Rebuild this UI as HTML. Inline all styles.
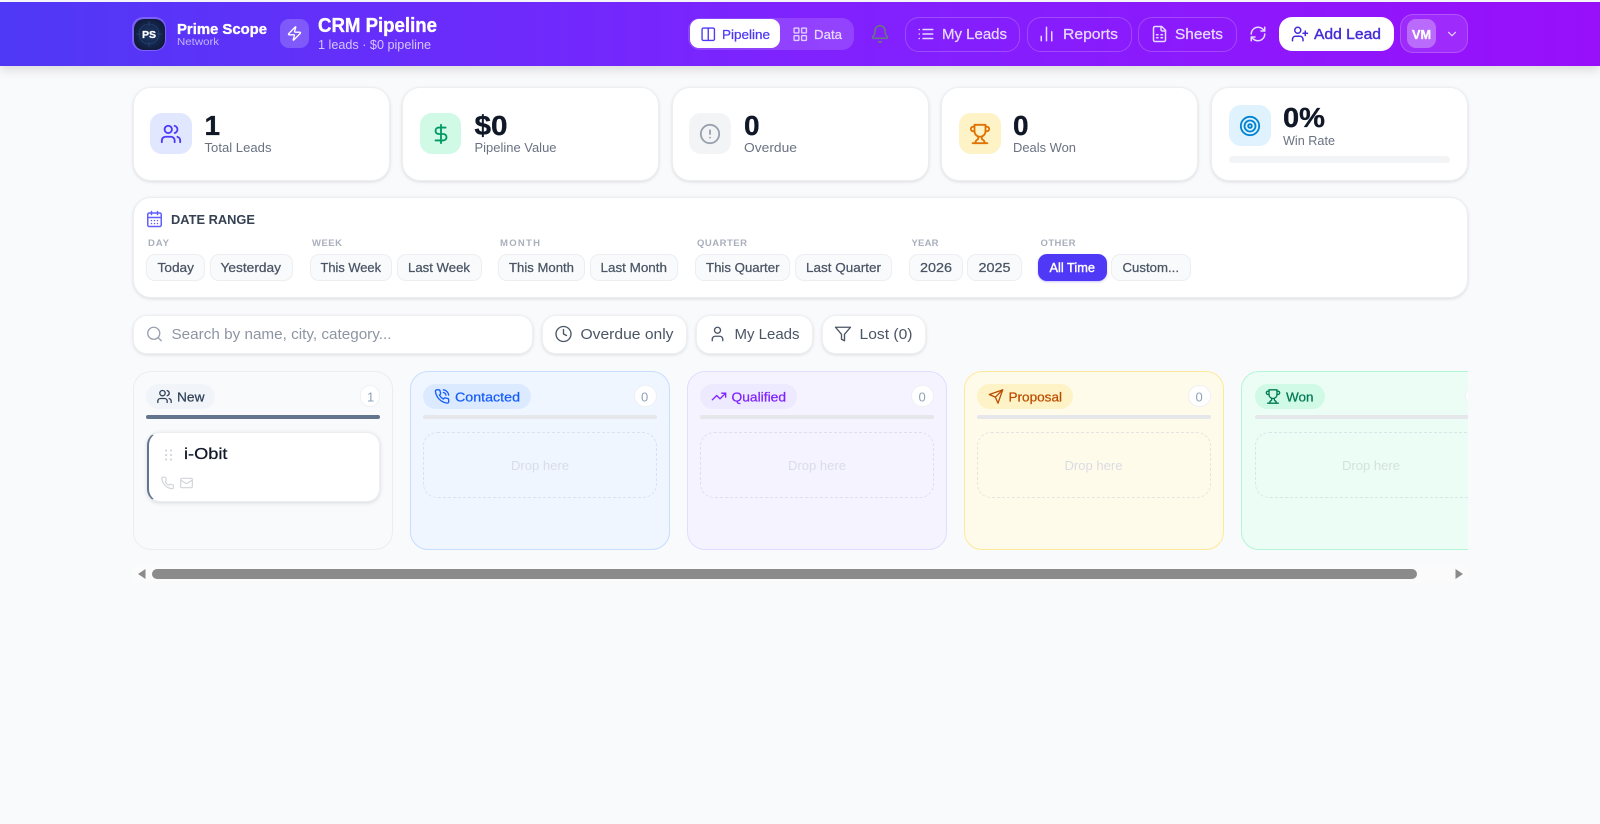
<!DOCTYPE html>
<html lang="en"><head><meta charset="utf-8"><title>CRM Pipeline</title>
<style>
html,body{margin:0;padding:0;width:1600px;height:824px;overflow:hidden;background:#f9fafb;font-family:"Liberation Sans",sans-serif}
.b{position:absolute;box-sizing:border-box}
.hd{left:0;top:2px;width:1600px;height:64px;background:linear-gradient(90deg,#4f39f6,#7f22fe 50%,#9810fa);box-shadow:0 4px 10px rgba(0,0,0,.12)}
.hb{top:17px;height:35px;border:1px solid rgba(255,255,255,.2);border-radius:14px}
.card{top:87px;width:257px;height:93.5px;background:#fff;border:1px solid #eceef1;border-radius:18px;box-shadow:0 1px 3px rgba(0,0,0,.12)}
.ib{width:41.5px;height:41px;border-radius:12px}
.pill{top:254px;height:27px;background:#f9fafb;border:1px solid #eceef1;border-radius:9px}
.fb{top:314.5px;height:39px;background:#fff;border:1px solid #eef0f3;border-radius:14px;box-shadow:0 1px 3px rgba(0,0,0,.12)}
.col{top:371px;width:260px;height:179px;border:1px solid;border-radius:18px}
.chip{top:384px;height:25px;border-radius:13px}
.cnt{top:385px;height:22px;background:#fff;border:1px solid #eef0f3;border-radius:11px}
.bar{top:415px;width:234px;height:4px;border-radius:2px;background:#e5e7eb}
.dz{top:432px;width:234px;height:66px;border:1.5px dashed rgba(170,180,200,.3);border-radius:14px}
svg.o{position:absolute;left:0;top:0;width:1600px;height:824px;pointer-events:none}
svg.o text{font-family:"Liberation Sans",sans-serif}
.ic{fill:none;stroke:currentColor;stroke-width:2;stroke-linecap:round;stroke-linejoin:round}
.m{stroke:currentColor;stroke-width:.25;fill:currentColor}
.h{stroke:currentColor;stroke-width:.35;fill:currentColor;font-weight:700}
</style></head><body>

<div class="b hd"></div>
<div class="b" style="left:132px;top:17px;width:34px;height:34px;border-radius:11px;background:rgba(255,255,255,.22)"></div>
<div class="b" style="left:133.5px;top:18.5px;width:31px;height:31px;border-radius:10px;background:radial-gradient(circle,#1d3a66,#101a3c 75%)"></div>
<div class="b" style="left:280px;top:19px;width:29px;height:29px;border-radius:9px;background:rgba(255,255,255,.2)"></div>
<div class="b" style="left:688px;top:17.5px;width:166px;height:32.5px;border-radius:12px;background:rgba(255,255,255,.15)"></div>
<div class="b" style="left:690px;top:19px;width:90px;height:29px;border-radius:9px;background:#fff"></div>
<div class="b hb" style="left:905px;width:115px"></div>
<div class="b hb" style="left:1027px;width:105px"></div>
<div class="b hb" style="left:1138px;width:99px"></div>
<div class="b" style="left:1279px;top:17px;width:115px;height:34px;border-radius:13px;background:#fff"></div>
<div class="b" style="left:1400px;top:14px;width:68px;height:39px;border-radius:13px;background:rgba(255,255,255,.1);border:1px solid rgba(255,255,255,.2)"></div>
<div class="b" style="left:1407px;top:19px;width:29px;height:29px;border-radius:9px;background:rgba(255,255,255,.3)"></div>

<div class="b card" style="left:133px"></div>
<div class="b card" style="left:402px"></div>
<div class="b card" style="left:671.5px"></div>
<div class="b card" style="left:941px"></div>
<div class="b card" style="left:1211px"></div>
<div class="b ib" style="left:150px;top:113px;background:#e0e7ff"></div>
<div class="b ib" style="left:419.5px;top:113px;background:#d0fae5"></div>
<div class="b ib" style="left:689px;top:113px;background:#f3f4f6"></div>
<div class="b ib" style="left:959px;top:113px;background:#fef3c6"></div>
<div class="b ib" style="left:1229px;top:105px;background:#dff2fe"></div>
<div class="b" style="left:1229px;top:156px;width:221px;height:7px;border-radius:4px;background:#f3f4f6"></div>

<div class="b" style="left:133px;top:197px;width:1335px;height:101px;background:#fff;border:1px solid #eceef1;border-radius:18px;box-shadow:0 1px 3px rgba(0,0,0,.12)"></div>
<div class="b pill" style="left:146px;width:59px"></div>
<div class="b pill" style="left:209.5px;width:83.5px"></div>
<div class="b pill" style="left:309.5px;width:82.5px"></div>
<div class="b pill" style="left:397px;width:85px"></div>
<div class="b pill" style="left:498px;width:87px"></div>
<div class="b pill" style="left:589.5px;width:88.5px"></div>
<div class="b pill" style="left:695px;width:95px"></div>
<div class="b pill" style="left:794.5px;width:97.5px"></div>
<div class="b pill" style="left:909px;width:54px"></div>
<div class="b pill" style="left:967px;width:55px"></div>
<div class="b pill" style="left:1038px;width:69px;background:#4f39f6;border-color:#4f39f6;box-shadow:0 1px 2px rgba(79,57,246,.3)"></div>
<div class="b pill" style="left:1111px;width:80px"></div>

<div class="b fb" style="left:133px;width:400px"></div>
<div class="b fb" style="left:541.5px;width:145px"></div>
<div class="b fb" style="left:695.5px;width:117px"></div>
<div class="b fb" style="left:821.5px;width:104.5px"></div>

<div class="b" style="left:133px;top:365px;width:1335px;height:190px;overflow:hidden">
  <div class="b col" style="left:0;top:5.5px;background:#f8fafc;border-color:#eaeef4"></div>
  <div class="b col" style="left:277px;top:5.5px;background:#eff6ff;border-color:#c6deff"></div>
  <div class="b col" style="left:554px;top:5.5px;background:#f5f3ff;border-color:#e2dcff"></div>
  <div class="b col" style="left:831px;top:5.5px;background:#fffbeb;border-color:#fee99b"></div>
  <div class="b col" style="left:1108px;top:5.5px;background:#ecfdf5;border-color:#b4f5d8"></div>

  <div class="b chip" style="left:13px;top:19px;width:69px;background:#f1f5f9"></div>
  <div class="b chip" style="left:290px;top:19px;width:108px;background:#dbeafe"></div>
  <div class="b chip" style="left:567px;top:19px;width:97px;background:#ede9fe"></div>
  <div class="b chip" style="left:844px;top:19px;width:96px;background:#fef3c6"></div>
  <div class="b chip" style="left:1121.5px;top:19px;width:70px;background:#d0fae5"></div>

  <div class="b cnt" style="left:227px;top:20px;width:20px"></div>
  <div class="b cnt" style="left:500.5px;top:20px;width:23px"></div>
  <div class="b cnt" style="left:777.5px;top:20px;width:23px"></div>
  <div class="b cnt" style="left:1054.5px;top:20px;width:23px"></div>
  <div class="b cnt" style="left:1332px;top:20px;width:23px"></div>

  <div class="b bar" style="left:13px;top:50px;background:#62748e"></div>
  <div class="b bar" style="left:290px;top:50px"></div>
  <div class="b bar" style="left:567px;top:50px"></div>
  <div class="b bar" style="left:844px;top:50px"></div>
  <div class="b bar" style="left:1121.5px;top:50px"></div>

  <div class="b" style="left:13.5px;top:67px;width:233.5px;height:70px;background:#fff;border:1px solid #eceef1;border-left:2.5px solid #62748e;border-radius:13px;box-shadow:0 1px 4px rgba(0,0,0,.14)"></div>
  <div class="b dz" style="left:290px;top:67px"></div>
  <div class="b dz" style="left:567px;top:67px"></div>
  <div class="b dz" style="left:844px;top:67px"></div>
  <div class="b dz" style="left:1121.5px;top:67px"></div>
</div>

<div class="b" style="left:133px;top:566px;width:1335px;height:16px;background:#fbfbfb"></div>
<div class="b" style="left:151.5px;top:569px;width:1265.5px;height:9.5px;border-radius:5px;background:#8b8b8b"></div>

<svg class="o" viewBox="0 0 1600 824" xmlns="http://www.w3.org/2000/svg">
<defs>
<symbol id="zap" viewBox="0 0 24 24"><path d="M4 14a1 1 0 0 1-.78-1.63l9.9-10.2a.5.5 0 0 1 .86.46l-1.92 6.02A1 1 0 0 0 13 10h7a1 1 0 0 1 .78 1.63l-9.9 10.2a.5.5 0 0 1-.86-.46l1.92-6.02A1 1 0 0 0 11 14z"/></symbol>
<symbol id="cols" viewBox="0 0 24 24"><rect x="3" y="3" width="18" height="18" rx="2"/><path d="M12 3v18"/></symbol>
<symbol id="grid" viewBox="0 0 24 24"><rect x="3" y="3" width="7" height="7" rx="1"/><rect x="14" y="3" width="7" height="7" rx="1"/><rect x="14" y="14" width="7" height="7" rx="1"/><rect x="3" y="14" width="7" height="7" rx="1"/></symbol>
<symbol id="bell" viewBox="0 0 24 24"><path d="M10.268 21a2 2 0 0 0 3.464 0"/><path d="M3.262 15.326A1 1 0 0 0 4 17h16a1 1 0 0 0 .74-1.673C19.41 13.956 18 12.499 18 8A6 6 0 0 0 6 8c0 4.499-1.411 5.956-2.738 7.326"/></symbol>
<symbol id="list" viewBox="0 0 24 24"><path d="M3 12h.01M3 18h.01M3 6h.01M8 12h13M8 18h13M8 6h13"/></symbol>
<symbol id="bars" viewBox="0 0 24 24"><path d="M5 21v-6M12 21V3M19 21V9"/></symbol>
<symbol id="sheet" viewBox="0 0 24 24"><path d="M15 2H6a2 2 0 0 0-2 2v16a2 2 0 0 0 2 2h12a2 2 0 0 0 2-2V7Z"/><path d="M14 2v4a2 2 0 0 0 2 2h4"/><path d="M8 13h2M14 13h2M8 17h2M14 17h2"/></symbol>
<symbol id="refresh" viewBox="0 0 24 24"><path d="M3 12a9 9 0 0 1 9-9 9.75 9.75 0 0 1 6.74 2.74L21 8"/><path d="M21 3v5h-5"/><path d="M21 12a9 9 0 0 1-9 9 9.75 9.75 0 0 1-6.74-2.74L3 16"/><path d="M8 16H3v5"/></symbol>
<symbol id="uplus" viewBox="0 0 24 24"><path d="M16 21v-2a4 4 0 0 0-4-4H6a4 4 0 0 0-4 4v2"/><circle cx="9" cy="7" r="4"/><path d="M19 8v6M22 11h-6"/></symbol>
<symbol id="chev" viewBox="0 0 24 24"><path d="m6 9 6 6 6-6"/></symbol>
<symbol id="users" viewBox="0 0 24 24"><path d="M16 21v-2a4 4 0 0 0-4-4H6a4 4 0 0 0-4 4v2"/><circle cx="9" cy="7" r="4"/><path d="M22 21v-2a4 4 0 0 0-3-3.87"/><path d="M16 3.13a4 4 0 0 1 0 7.75"/></symbol>
<symbol id="dollar" viewBox="0 0 24 24"><path d="M12 2v20"/><path d="M17 5H9.5a3.5 3.5 0 0 0 0 7h5a3.5 3.5 0 0 1 0 7H6"/></symbol>
<symbol id="alert" viewBox="0 0 24 24"><circle cx="12" cy="12" r="10"/><path d="M12 8v4M12 16h.01"/></symbol>
<symbol id="trophy" viewBox="0 0 24 24"><path d="M6 9H4.5a2.5 2.5 0 0 1 0-5H6"/><path d="M18 9h1.5a2.5 2.5 0 0 0 0-5H18"/><path d="M4 22h16"/><path d="M10 14.66V17c0 .55-.47.98-.97 1.21C7.85 18.75 7 20.24 7 22"/><path d="M14 14.66V17c0 .55.47.98.97 1.21C16.15 18.75 17 20.24 17 22"/><path d="M18 2H6v7a6 6 0 0 0 12 0V2Z"/></symbol>
<symbol id="target" viewBox="0 0 24 24"><circle cx="12" cy="12" r="10"/><circle cx="12" cy="12" r="6"/><circle cx="12" cy="12" r="2"/></symbol>
<symbol id="cal" viewBox="0 0 24 24"><rect x="3" y="4" width="18" height="18" rx="2"/><path d="M8 2v4M16 2v4M3 10h18M8 14h.01M12 14h.01M16 14h.01M8 18h.01M12 18h.01M16 18h.01"/></symbol>
<symbol id="search" viewBox="0 0 24 24"><circle cx="11" cy="11" r="8"/><path d="m21 21-4.3-4.3"/></symbol>
<symbol id="clock" viewBox="0 0 24 24"><circle cx="12" cy="12" r="10"/><path d="M12 6v6l4 2"/></symbol>
<symbol id="user" viewBox="0 0 24 24"><path d="M19 21v-2a4 4 0 0 0-4-4H9a4 4 0 0 0-4 4v2"/><circle cx="12" cy="7" r="4"/></symbol>
<symbol id="filter" viewBox="0 0 24 24"><path d="M22 3H2l8 9.46V19l4 2v-8.54z"/></symbol>
<symbol id="phone" viewBox="0 0 24 24"><path d="M22 16.92v3a2 2 0 0 1-2.18 2 19.79 19.79 0 0 1-8.63-3.07 19.5 19.5 0 0 1-6-6 19.79 19.79 0 0 1-3.07-8.67A2 2 0 0 1 4.11 2h3a2 2 0 0 1 2 1.72 12.84 12.84 0 0 0 .7 2.81 2 2 0 0 1-.45 2.11L8.09 9.91a16 16 0 0 0 6 6l1.27-1.27a2 2 0 0 1 2.11-.45 12.84 12.84 0 0 0 2.81.7A2 2 0 0 1 22 16.92z"/></symbol>
<symbol id="pcall" viewBox="0 0 24 24"><path d="M22 16.92v3a2 2 0 0 1-2.18 2 19.79 19.79 0 0 1-8.63-3.07 19.5 19.5 0 0 1-6-6 19.79 19.79 0 0 1-3.07-8.67A2 2 0 0 1 4.11 2h3a2 2 0 0 1 2 1.72 12.84 12.84 0 0 0 .7 2.81 2 2 0 0 1-.45 2.11L8.09 9.91a16 16 0 0 0 6 6l1.27-1.27a2 2 0 0 1 2.11-.45 12.84 12.84 0 0 0 2.81.7A2 2 0 0 1 22 16.92z"/><path d="M14.05 2a9 9 0 0 1 8 7.94"/><path d="M14.05 6A5 5 0 0 1 18 10"/></symbol>
<symbol id="trend" viewBox="0 0 24 24"><path d="M22 7l-8.5 8.5-5-5L2 17"/><path d="M16 7h6v6"/></symbol>
<symbol id="send" viewBox="0 0 24 24"><path d="m22 2-7 20-4-9-9-4Z"/><path d="M22 2 11 13"/></symbol>
<symbol id="mail" viewBox="0 0 24 24"><rect x="2" y="4" width="20" height="16" rx="2"/><path d="m22 7-8.97 5.7a1.94 1.94 0 0 1-2.06 0L2 7"/></symbol>
</defs>

<!-- logo details -->
<g stroke="#3b6ea5" stroke-width=".6" opacity=".55" fill="none"><circle cx="149" cy="34" r="10"/><path d="M149 21v5M149 42v5M136 34h5M157 34h5"/></g>
<text x="142" y="38" font-size="10.5" class="h" color="#fff" textLength="14" lengthAdjust="spacingAndGlyphs">PS</text>

<text x="177" y="34" font-size="15" class="h" color="#fff" textLength="90" lengthAdjust="spacingAndGlyphs">Prime Scope</text>
<text x="177" y="45" font-size="10.5" fill="#fff" fill-opacity=".62" textLength="42" lengthAdjust="spacingAndGlyphs">Network</text>
<use href="#zap" x="286.5" y="25.5" width="16" height="16" class="ic" color="#fff"/>
<text x="318" y="32" font-size="20" class="h" color="#fff" textLength="119" lengthAdjust="spacingAndGlyphs">CRM Pipeline</text>
<text x="318" y="49" font-size="13" fill="#fff" fill-opacity=".72" textLength="113" lengthAdjust="spacingAndGlyphs">1 leads · $0 pipeline</text>

<use href="#cols" x="700" y="26" width="16.5" height="16.5" class="ic" color="#4f39f6"/>
<text x="722" y="39" font-size="13" class="m" color="#4f39f6" textLength="48" lengthAdjust="spacingAndGlyphs">Pipeline</text>
<use href="#grid" x="792" y="26" width="16.5" height="16.5" class="ic" color="#e0d0ff"/>
<text x="814" y="39" font-size="13" class="m" color="#e6d8ff" textLength="28" lengthAdjust="spacingAndGlyphs">Data</text>
<use href="#bell" x="870" y="24" width="20" height="20" class="ic" color="#66806f" style="stroke-width:1.7"/>

<use href="#list" x="917" y="25" width="18" height="18" class="ic" color="#e6d8ff"/>
<text x="942" y="39" font-size="15" class="m" color="#e6d8ff" textLength="65" lengthAdjust="spacingAndGlyphs">My Leads</text>
<use href="#bars" x="1037.5" y="25" width="18" height="18" class="ic" color="#e6d8ff"/>
<text x="1063" y="39" font-size="15" class="m" color="#e6d8ff" textLength="55" lengthAdjust="spacingAndGlyphs">Reports</text>
<use href="#sheet" x="1150.5" y="25" width="18" height="18" class="ic" color="#e6d8ff"/>
<text x="1175" y="39" font-size="15" class="m" color="#e6d8ff" textLength="48" lengthAdjust="spacingAndGlyphs">Sheets</text>
<use href="#refresh" x="1249" y="25" width="18" height="18" class="ic" color="#e6d8ff"/>
<use href="#uplus" x="1291" y="25" width="18" height="18" class="ic" color="#432dd7"/>
<text x="1314" y="39" font-size="15" class="m" color="#432dd7" textLength="67" lengthAdjust="spacingAndGlyphs" style="stroke-width:.4">Add Lead</text>
<text x="1412" y="39" font-size="13" class="h" color="#fff" textLength="19" lengthAdjust="spacingAndGlyphs">VM</text>
<use href="#chev" x="1445" y="27" width="14" height="14" class="ic" color="#e6d8ff"/>

<!-- stats -->
<use href="#users" x="160" y="123" width="22" height="22" class="ic" color="#4f39f6"/>
<text x="204.5" y="135" font-size="28" class="h" color="#101828">1</text>
<text x="204.5" y="152" font-size="13" fill="#6a7282" textLength="67" lengthAdjust="spacingAndGlyphs">Total Leads</text>
<use href="#dollar" x="430" y="123" width="22" height="22" class="ic" color="#009966"/>
<text x="474.5" y="135" font-size="28" class="h" color="#101828" textLength="33" lengthAdjust="spacingAndGlyphs">$0</text>
<text x="474.5" y="152" font-size="13" fill="#6a7282" textLength="82" lengthAdjust="spacingAndGlyphs">Pipeline Value</text>
<use href="#alert" x="699" y="123" width="22" height="22" class="ic" color="#99a1af"/>
<text x="744" y="135" font-size="28" class="h" color="#101828">0</text>
<text x="744" y="152" font-size="13" fill="#6a7282" textLength="53" lengthAdjust="spacingAndGlyphs">Overdue</text>
<use href="#trophy" x="969" y="123" width="22" height="22" class="ic" color="#e17100"/>
<text x="1013" y="135" font-size="28" class="h" color="#101828">0</text>
<text x="1013" y="152" font-size="13" fill="#6a7282" textLength="63" lengthAdjust="spacingAndGlyphs">Deals Won</text>
<use href="#target" x="1239" y="115" width="22" height="22" class="ic" color="#0084d1"/>
<text x="1283" y="127" font-size="28" class="h" color="#101828" textLength="42" lengthAdjust="spacingAndGlyphs">0%</text>
<text x="1283" y="145" font-size="13" fill="#6a7282" textLength="52" lengthAdjust="spacingAndGlyphs">Win Rate</text>

<!-- date range -->
<use href="#cal" x="145.5" y="210" width="18" height="18" class="ic" color="#615fff"/>
<text x="171" y="224" font-size="13" font-weight="700" fill="#364153" textLength="84" lengthAdjust="spacingAndGlyphs">DATE RANGE</text>
<g font-size="9.5" font-weight="700" fill="#a9afbb">
<text x="148" y="246" textLength="21" lengthAdjust="spacing">DAY</text>
<text x="312" y="246" textLength="30" lengthAdjust="spacing">WEEK</text>
<text x="500" y="246" textLength="40" lengthAdjust="spacing">MONTH</text>
<text x="697" y="246" textLength="50" lengthAdjust="spacing">QUARTER</text>
<text x="911.5" y="246" textLength="27" lengthAdjust="spacing">YEAR</text>
<text x="1040.5" y="246" textLength="35" lengthAdjust="spacing">OTHER</text>
</g>
<g font-size="13" class="m" color="#4a5565">
<text x="157.5" y="272" textLength="36.5" lengthAdjust="spacingAndGlyphs">Today</text>
<text x="220.5" y="272" textLength="60.5" lengthAdjust="spacingAndGlyphs">Yesterday</text>
<text x="320.5" y="272" textLength="60.5" lengthAdjust="spacingAndGlyphs">This Week</text>
<text x="408" y="272" textLength="62" lengthAdjust="spacingAndGlyphs">Last Week</text>
<text x="509" y="272" textLength="65" lengthAdjust="spacingAndGlyphs">This Month</text>
<text x="600.5" y="272" textLength="66.5" lengthAdjust="spacingAndGlyphs">Last Month</text>
<text x="706" y="272" textLength="73.5" lengthAdjust="spacingAndGlyphs">This Quarter</text>
<text x="806" y="272" textLength="75" lengthAdjust="spacingAndGlyphs">Last Quarter</text>
<text x="920" y="272" textLength="32" lengthAdjust="spacingAndGlyphs">2026</text>
<text x="978.5" y="272" textLength="32" lengthAdjust="spacingAndGlyphs">2025</text>
<text x="1122.5" y="272" textLength="56.5" lengthAdjust="spacingAndGlyphs">Custom...</text>
</g>
<text x="1049.5" y="272" font-size="13" class="m" color="#fff" textLength="45.5" lengthAdjust="spacingAndGlyphs" style="stroke-width:.4">All Time</text>

<!-- filters -->
<use href="#search" x="145.5" y="325" width="18" height="18" class="ic" color="#99a1af" style="stroke-width:1.8"/>
<text x="171.5" y="339" font-size="15" fill="#8d95a3" textLength="220" lengthAdjust="spacingAndGlyphs">Search by name, city, category...</text>
<use href="#clock" x="554.5" y="325" width="18" height="18" class="ic" color="#4a5565" style="stroke-width:1.8"/>
<text x="580.5" y="339" font-size="15" fill="#4a5565" textLength="93" lengthAdjust="spacingAndGlyphs">Overdue only</text>
<use href="#user" x="708.5" y="325" width="18" height="18" class="ic" color="#4a5565" style="stroke-width:1.8"/>
<text x="734.5" y="339" font-size="15" fill="#4a5565" textLength="65" lengthAdjust="spacingAndGlyphs">My Leads</text>
<use href="#filter" x="834" y="325" width="18" height="18" class="ic" color="#4a5565" style="stroke-width:1.8"/>
<text x="859.5" y="339" font-size="15" fill="#4a5565" textLength="53" lengthAdjust="spacingAndGlyphs">Lost (0)</text>

<!-- columns -->
<use href="#users" x="156.5" y="388.5" width="16" height="16" class="ic" color="#314158"/>
<text x="177" y="401.5" font-size="13" class="m" color="#314158" textLength="27.5" lengthAdjust="spacingAndGlyphs">New</text>
<text x="367" y="401.5" font-size="13" fill="#90a1b9">1</text>
<use href="#pcall" x="434" y="388.5" width="16" height="16" class="ic" color="#155dfc"/>
<text x="455" y="401.5" font-size="13" class="m" color="#155dfc" textLength="65" lengthAdjust="spacingAndGlyphs">Contacted</text>
<text x="641" y="401.5" font-size="13" fill="#90a1b9">0</text>
<use href="#trend" x="711" y="388.5" width="16" height="16" class="ic" color="#7f22fe"/>
<text x="731.5" y="401.5" font-size="13" class="m" color="#7f22fe" textLength="54.5" lengthAdjust="spacingAndGlyphs">Qualified</text>
<text x="918.5" y="401.5" font-size="13" fill="#90a1b9">0</text>
<use href="#send" x="988" y="388.5" width="16" height="16" class="ic" color="#bb4d00"/>
<text x="1008.5" y="401.5" font-size="13" class="m" color="#bb4d00" textLength="53.5" lengthAdjust="spacingAndGlyphs">Proposal</text>
<text x="1195.5" y="401.5" font-size="13" fill="#90a1b9">0</text>
<use href="#trophy" x="1265" y="388.5" width="16" height="16" class="ic" color="#007a55"/>
<text x="1286" y="401.5" font-size="13" class="m" color="#007a55" textLength="27.5" lengthAdjust="spacingAndGlyphs">Won</text>

<g fill="#d1d5dc"><circle cx="166" cy="450.5" r="1.1"/><circle cx="171" cy="450.5" r="1.1"/><circle cx="166" cy="455" r="1.1"/><circle cx="171" cy="455" r="1.1"/><circle cx="166" cy="459.5" r="1.1"/><circle cx="171" cy="459.5" r="1.1"/></g>
<text x="184" y="459" font-size="16" class="m" color="#101828" textLength="43.5" lengthAdjust="spacingAndGlyphs">i-Obit</text>
<use href="#phone" x="160.5" y="476" width="14" height="14" class="ic" color="#d1d5dc"/>
<use href="#mail" x="179.5" y="476" width="14" height="14" class="ic" color="#d1d5dc"/>

<g font-size="13" fill="#dadce4">
<text x="511" y="470" textLength="58" lengthAdjust="spacingAndGlyphs">Drop here</text>
<text x="788" y="470" textLength="58" lengthAdjust="spacingAndGlyphs">Drop here</text>
<text x="1064.5" y="470" textLength="58" lengthAdjust="spacingAndGlyphs">Drop here</text>
<text x="1342" y="470" textLength="58" lengthAdjust="spacingAndGlyphs" fill="#d3e2de">Drop here</text>
</g>

<path d="M145.5 569v10l-7.5-5z" fill="#8b8b8b"/>
<path d="M1455.5 569v10l7.5-5z" fill="#8b8b8b"/>
</svg>
</body></html>
